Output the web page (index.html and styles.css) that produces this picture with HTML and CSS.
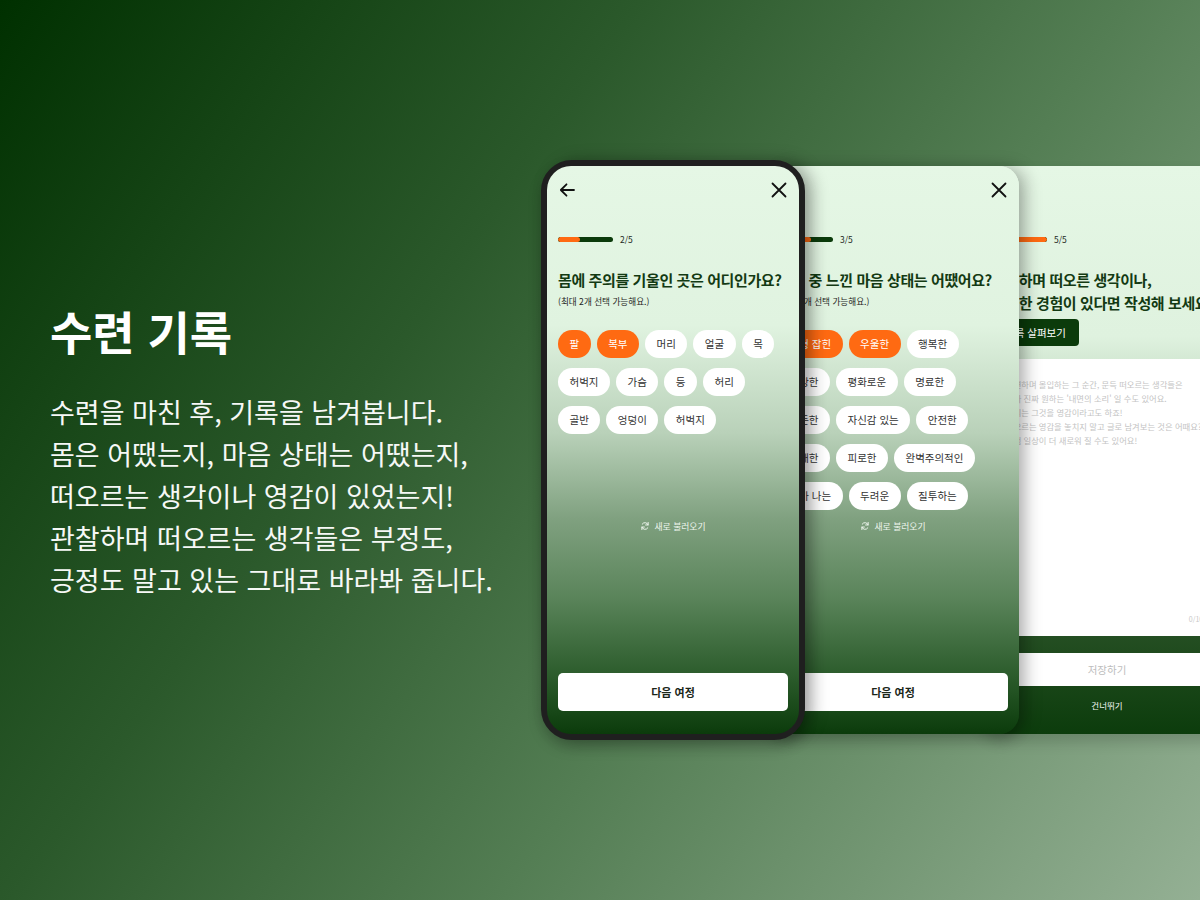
FILE: index.html
```html
<!DOCTYPE html>
<html lang="ko">
<head>
<meta charset="utf-8">
<title>수련 기록</title>
<link rel="stylesheet" href="styles.css">
</head>
<body>
<main class="stage">
  <section class="intro">
    <h1 class="intro-title">수련 기록</h1>
    <p class="intro-text">수련을 마친 후, 기록을 남겨봅니다.<br>몸은 어땠는지, 마음 상태는 어땠는지,<br>떠오르는 생각이나 영감이 있었는지!<br>관찰하며 떠오르는 생각들은 부정도,<br>긍정도 말고 있는 그대로 바라봐 줍니다.</p>
  </section>

  <section class="phones">
    <div class="device">
      <div class="screen">
        <header class="topbar">
          <svg class="icon" viewBox="0 0 16 16" width="16" height="16"><path d="M15 8H1.8M7.5 2.3 1.8 8l5.7 5.7" fill="none" stroke="#111" stroke-width="1.8" stroke-linecap="round" stroke-linejoin="round"/></svg>
          <svg class="icon" viewBox="0 0 16 16" width="16" height="16"><path d="M1.5 1.5l13 13M14.5 1.5l-13 13" fill="none" stroke="#111" stroke-width="1.8" stroke-linecap="round"/></svg>
        </header>
        <div class="progress"><span class="track"><span class="fill" style="width:40%"></span></span><span class="step">2/5</span></div>
        <h2 class="question">몸에 주의를 기울인 곳은 어디인가요?</h2>
        <p class="hint">(최대 2개 선택 가능해요.)</p>
        <div class="chips">
          <ul class="chip-row">
            <li class="chip chip-on">팔</li>
            <li class="chip chip-on">복부</li>
            <li class="chip">머리</li>
            <li class="chip">얼굴</li>
            <li class="chip">목</li>
          </ul>
          <ul class="chip-row">
            <li class="chip">허벅지</li>
            <li class="chip">가슴</li>
            <li class="chip">등</li>
            <li class="chip">허리</li>
          </ul>
          <ul class="chip-row">
            <li class="chip">골반</li>
            <li class="chip">엉덩이</li>
            <li class="chip">허벅지</li>
          </ul>
        </div>
        <div class="reload">
          <svg class="reload-icon" viewBox="0 0 24 24" width="10" height="10"><path d="M19.5 9.5A8 8 0 0 0 5.2 7.6M4.5 14.5a8 8 0 0 0 14.3 1.9M19.5 3.5v6h-6M4.5 20.5v-6h6" fill="none" stroke="#eef6ee" stroke-width="2.4" stroke-linecap="round" stroke-linejoin="round"/></svg>
          <span>새로 불러오기</span>
        </div>
        <button class="next" type="button">다음 여정</button>
      </div>
    </div>

    <div class="screen screen-2">
      <header class="topbar">
        <svg class="icon" viewBox="0 0 16 16" width="16" height="16"><path d="M15 8H1.8M7.5 2.3 1.8 8l5.7 5.7" fill="none" stroke="#111" stroke-width="1.8" stroke-linecap="round" stroke-linejoin="round"/></svg>
        <svg class="icon" viewBox="0 0 16 16" width="16" height="16"><path d="M1.5 1.5l13 13M14.5 1.5l-13 13" fill="none" stroke="#111" stroke-width="1.8" stroke-linecap="round"/></svg>
      </header>
      <div class="progress"><span class="track"><span class="fill" style="width:60%"></span></span><span class="step">3/5</span></div>
      <h2 class="question">수련 중 느낀 마음 상태는 어땠어요?</h2>
      <p class="hint">(최대 2개 선택 가능해요.)</p>
      <div class="chips">
        <ul class="chip-row">
          <li class="chip chip-on">균형 잡힌</li>
          <li class="chip chip-on">우울한</li>
          <li class="chip">행복한</li>
        </ul>
        <ul class="chip-row">
          <li class="chip">건강한</li>
          <li class="chip">평화로운</li>
          <li class="chip">명료한</li>
        </ul>
        <ul class="chip-row">
          <li class="chip">든든한</li>
          <li class="chip">자신감 있는</li>
          <li class="chip">안전한</li>
        </ul>
        <ul class="chip-row">
          <li class="chip">불쾌한</li>
          <li class="chip">피로한</li>
          <li class="chip">완벽주의적인</li>
        </ul>
        <ul class="chip-row">
          <li class="chip">화가 나는</li>
          <li class="chip">두려운</li>
          <li class="chip">질투하는</li>
        </ul>
      </div>
      <div class="reload">
        <svg class="reload-icon" viewBox="0 0 24 24" width="10" height="10"><path d="M19.5 9.5A8 8 0 0 0 5.2 7.6M4.5 14.5a8 8 0 0 0 14.3 1.9M19.5 3.5v6h-6M4.5 20.5v-6h6" fill="none" stroke="#eef6ee" stroke-width="2.4" stroke-linecap="round" stroke-linejoin="round"/></svg>
        <span>새로 불러오기</span>
      </div>
      <button class="next" type="button">다음 여정</button>
    </div>

    <div class="screen screen-3">
      <header class="topbar">
        <svg class="icon" viewBox="0 0 16 16" width="16" height="16"><path d="M15 8H1.8M7.5 2.3 1.8 8l5.7 5.7" fill="none" stroke="#111" stroke-width="1.8" stroke-linecap="round" stroke-linejoin="round"/></svg>
        <svg class="icon" viewBox="0 0 16 16" width="16" height="16"><path d="M1.5 1.5l13 13M14.5 1.5l-13 13" fill="none" stroke="#111" stroke-width="1.8" stroke-linecap="round"/></svg>
      </header>
      <div class="progress"><span class="track"><span class="fill" style="width:100%"></span></span><span class="step">5/5</span></div>
      <h2 class="question question-2l">수련하며 떠오른 생각이나,<br>특별한 경험이 있다면 작성해 보세요.</h2>
      <button class="history" type="button">기록 살펴보기</button>
      <div class="note">
        <p class="note-text">수련하며 몰입하는 그 순간, 문득 떠오르는 생각들은<br>내가 진짜 원하는 '내면의 소리' 일 수도 있어요.<br>우리는 그것을 영감이라고도 하죠!<br>떠오르는 영감을 놓치지 말고 글로 남겨보는 것은 어때요?<br>그럼 일상이 더 새로워 질 수도 있어요!</p>
        <span class="count">0/1000</span>
      </div>
      <button class="save" type="button">저장하기</button>
      <span class="skip">건너뛰기</span>
    </div>
  </section>
</main>
</body>
</html>
```

FILE: styles.css
```css
* {
  box-sizing: border-box;
  margin: 0;
  padding: 0;
}

html, body {
  width: 1200px;
  height: 900px;
  overflow: hidden;
}

body {
  font-family: "Noto Sans CJK KR", "Noto Sans", sans-serif;
  color: #111;
}

.stage {
  display: flex;
  width: 1200px;
  height: 900px;
  overflow: hidden;
  background: linear-gradient(125deg, #003000 0%, #2b592b 35%, #547e54 62%, #94b094 100%);
}

/* left intro */
.intro {
  flex: none;
  width: 541px;
  padding: 304px 0 0 50px;
  color: #fff;
}

.intro-title {
  font-size: 46px;
  line-height: 52px;
  font-weight: 700;
  letter-spacing: 0;
}

.intro-text {
  margin-top: 35px;
  font-size: 27px;
  line-height: 42px;
  font-weight: 400;
  color: #f6f8f6;
  white-space: nowrap;
}

/* phones */
.phones {
  flex: none;
  display: flex;
  align-items: flex-start;
  padding-top: 160px;
}

.device {
  flex: none;
  position: relative;
  z-index: 3;
  width: 264px;
  height: 580px;
  border: 6px solid #1f1f1f;
  border-radius: 31px;
  background: #1f1f1f;
  box-shadow: 8px 0 16px rgba(0, 0, 0, 0.28), 0 8px 14px rgba(0, 0, 0, 0.18);
}

.screen {
  flex: none;
  display: flex;
  flex-direction: column;
  width: 252px;
  height: 568px;
  padding: 0 11px;
  border-radius: 24px;
  overflow: hidden;
  background: linear-gradient(to bottom, #e5f7e5 0%, #e0f3e0 28%, #b9d1b9 47%, #80a180 62%, #5a845a 76%, #2e5e2e 89%, #0b3b0b 100%);
}

.screen-2 {
  position: relative;
  z-index: 2;
  margin: 6px 0 0 -38px;
  border-radius: 20px;
  box-shadow: 8px 0 16px rgba(0, 0, 0, 0.22), 0 8px 14px rgba(0, 0, 0, 0.16);
}

.screen-3 {
  position: relative;
  z-index: 1;
  margin: 6px 0 0 -38px;
  border-radius: 20px;
  background: linear-gradient(to bottom, #e5f7e5 0%, #dff2df 30%, #aac5aa 50%, #5f875f 68%, #254f23 82%, #0c3c0c 100%);
  box-shadow: 0 8px 14px rgba(0, 0, 0, 0.16);
}

.topbar {
  flex: none;
  display: flex;
  justify-content: space-between;
  align-items: center;
  height: 48px;
  padding: 0 1px;
}

.icon {
  display: block;
}

.progress {
  flex: none;
  display: flex;
  align-items: center;
  height: 10px;
  margin-top: 20px;
}

.track {
  display: block;
  width: 55px;
  height: 5px;
  border-radius: 3px;
  background: #0b3b0b;
  overflow: hidden;
}

.fill {
  display: block;
  height: 100%;
  border-radius: 3px;
  background: #ff6a12;
}

.step {
  margin-left: 7px;
  font-size: 8.5px;
  line-height: 10px;
  color: #1d2a1d;
}

.question {
  flex: none;
  margin-top: 25px;
  font-size: 15px;
  line-height: 22px;
  font-weight: 700;
  letter-spacing: -0.4px;
  color: #133a13;
  white-space: nowrap;
}

.question-2l {
  margin-top: 24px;
  line-height: 23px;
}

.hint {
  flex: none;
  margin-top: 3px;
  font-size: 8.6px;
  line-height: 14px;
  color: #1c1c1c;
  white-space: nowrap;
}

.chips {
  flex: none;
  display: flex;
  flex-direction: column;
  gap: 10px;
  height: 189px;
  margin-top: 22px;
}

.chip-row {
  display: flex;
  gap: 6px;
  list-style: none;
}

.chip {
  height: 28px;
  padding: 0 11.5px;
  border-radius: 14px;
  background: #fff;
  font-size: 10.5px;
  line-height: 28px;
  color: #333;
  white-space: nowrap;
}

.chip-on {
  background: #ff6a12;
  color: #fff;
}

.reload {
  flex: none;
  display: flex;
  justify-content: center;
  align-items: center;
  gap: 4px;
  height: 14px;
  font-size: 8.8px;
  color: #eef6ee;
}

.reload-icon {
  display: block;
}

.next {
  flex: none;
  height: 38px;
  margin-top: auto;
  margin-bottom: 23px;
  border: 0;
  border-radius: 5px;
  background: #fff;
  font-family: inherit;
  font-size: 11px;
  font-weight: 700;
  color: #1a261a;
}

/* screen 3 */
.history {
  flex: none;
  align-self: flex-start;
  height: 27px;
  margin-top: 5px;
  padding: 0 13px;
  border: 0;
  border-radius: 4px;
  background: #0b3b0b;
  font-family: inherit;
  font-size: 10.5px;
  color: #fff;
}

.note {
  flex: none;
  display: flex;
  flex-direction: column;
  justify-content: space-between;
  height: 277px;
  margin-top: 13px;
  padding: 18px 11px 12px 14px;
  background: #fff;
}

.note-text {
  font-size: 8.3px;
  line-height: 14px;
  color: #c3c3c3;
  white-space: nowrap;
}

.count {
  align-self: flex-end;
  font-size: 7px;
  line-height: 10px;
  color: #c8c8c8;
}

.save {
  flex: none;
  height: 33px;
  margin-top: 17px;
  border: 0;
  background: #fff;
  font-family: inherit;
  font-size: 10.5px;
  color: #bdbdbd;
}

.skip {
  flex: none;
  margin-top: 12px;
  font-size: 8.5px;
  line-height: 14px;
  text-align: center;
  color: #f4f8f4;
}
```
